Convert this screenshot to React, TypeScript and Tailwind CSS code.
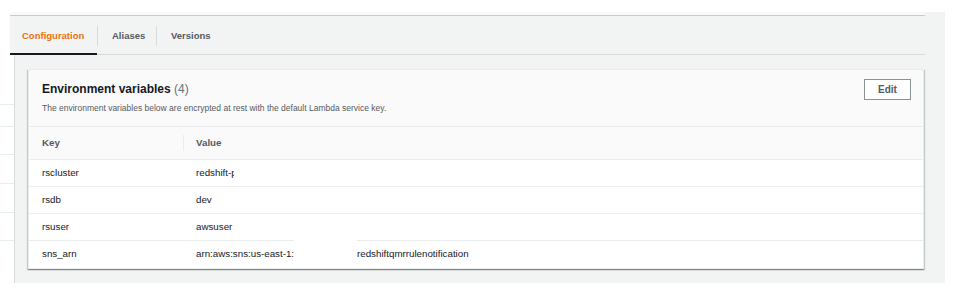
import React from "react";

type EnvVar = { key: string; value: React.ReactNode };

const font = "font-['Liberation_Sans',Arial,sans-serif]";

const rows: EnvVar[] = [
  {
    key: "rscluster",
    value: (
      <span className="inline-block w-[38px] overflow-hidden whitespace-nowrap align-middle">
        redshift-prod
      </span>
    ),
  },
  { key: "rsdb", value: "dev" },
  { key: "rsuser", value: "awsuser" },
  {
    key: "sns_arn",
    value: (
      <span className="flex items-center whitespace-nowrap">
        <span className="inline-block w-[98px] overflow-hidden">arn:aws:sns:us-east-1:6</span>
        {/* redacted account id */}
        <span className="relative inline-block h-[14px] w-[63px]">
          <span className="absolute left-0 right-0 top-[-8px] bottom-[-6px] bg-white" />
        </span>
        <span>redshiftqmrrulenotification</span>
      </span>
    ),
  },
];

const leftLines = [49, 71, 99, 128, 157, 185];

export default function App() {
  return (
    <div className={`relative h-[290px] w-[955px] overflow-hidden bg-white ${font}`}>
      {/* tab strip */}
      <div className="pl-[10px]">
        <div className="mt-[12px] w-[935px] bg-[#f2f3f3]">
          <div className="h-[4px] w-[915px] border-b border-[#c6cccc] bg-[#f9f9f9]" />
          <div className="flex h-[39px] w-[915px] items-stretch border-b border-[#d5dbdb] pt-[2px]">
            <div className="relative flex w-[87px] items-center pl-[12px] text-[9.5px] font-bold text-[#ec7211]">
              Configuration
              <span className="absolute bottom-[-1px] left-0 right-0 h-[2px] bg-[#16191f]" />
            </div>
            <div className="my-auto h-[20px] w-px bg-[#d5dbdb]" />
            <div className="flex w-[58px] items-center pl-[14px] text-[9.5px] font-bold text-[#545b64]">
              Aliases
            </div>
            <div className="my-auto h-[20px] w-px bg-[#d5dbdb]" />
            <div className="flex items-center pl-[14px] text-[9.5px] font-bold text-[#545b64]">
              Versions
            </div>
          </div>
        </div>
      </div>

      {/* content area */}
      <div className="flex">
        <div className="relative h-[228px] w-[15px] border-r border-[#d5dbdb] bg-white">
          {leftLines.map((y) => (
            <div
              key={y}
              className="absolute left-0 right-0 h-px bg-[#eaeded]"
              style={{ top: y }}
            />
          ))}
        </div>
        <div className="h-[228px] w-[930px] bg-[#f2f3f3] pl-[13px] pt-[14px]">
          <div className="w-[896px] border border-[#eaeded] bg-white shadow-[0_1px_1px_0_rgba(0,28,36,0.3),1px_1px_1px_0_rgba(0,28,36,0.15),-1px_1px_1px_0_rgba(0,28,36,0.15)]">
            {/* header */}
            <div className="flex h-[57px] justify-between border-b border-[#eaeded] bg-[#fafafa] pl-[13px] pr-[12px]">
              <div className="pt-[11px]">
                <h2 className="text-[12px] leading-[16px] font-bold text-[#16191f]">
                  Environment variables{" "}
                  <span className="font-normal text-[#687078]">(4)</span>
                </h2>
                <p className="mt-[4px] text-[8.5px] leading-[14px] text-[#545b64]">
                  The environment variables below are encrypted at rest with the default Lambda service key.
                </p>
              </div>
              <button
                type="button"
                className="mt-[9px] h-[21px] w-[47px] border border-[#879596] bg-white text-[10px] font-bold text-[#545b64]"
              >
                Edit
              </button>
            </div>

            {/* column headers */}
            <div className="flex h-[33px] items-center border-b border-[#eaeded] bg-[#fafafa] text-[9.75px] font-bold text-[#545b64]">
              <div className="w-[154px] pl-[13px]">Key</div>
              <div className="h-[16px] w-px bg-[#eaeded]" />
              <div className="pl-[12px]">Value</div>
            </div>

            {/* rows */}
            {rows.map((r, i) => (
              <div
                key={r.key}
                className={`flex h-[27px] items-center text-[9.75px] text-[#16191f] ${
                  i < rows.length - 1 ? "border-b border-[#eaeded]" : ""
                }`}
              >
                <div className="w-[154px] pl-[13px]">{r.key}</div>
                <div className="pl-[13px]">{r.value}</div>
              </div>
            ))}
          </div>
        </div>
      </div>
    </div>
  );
}
